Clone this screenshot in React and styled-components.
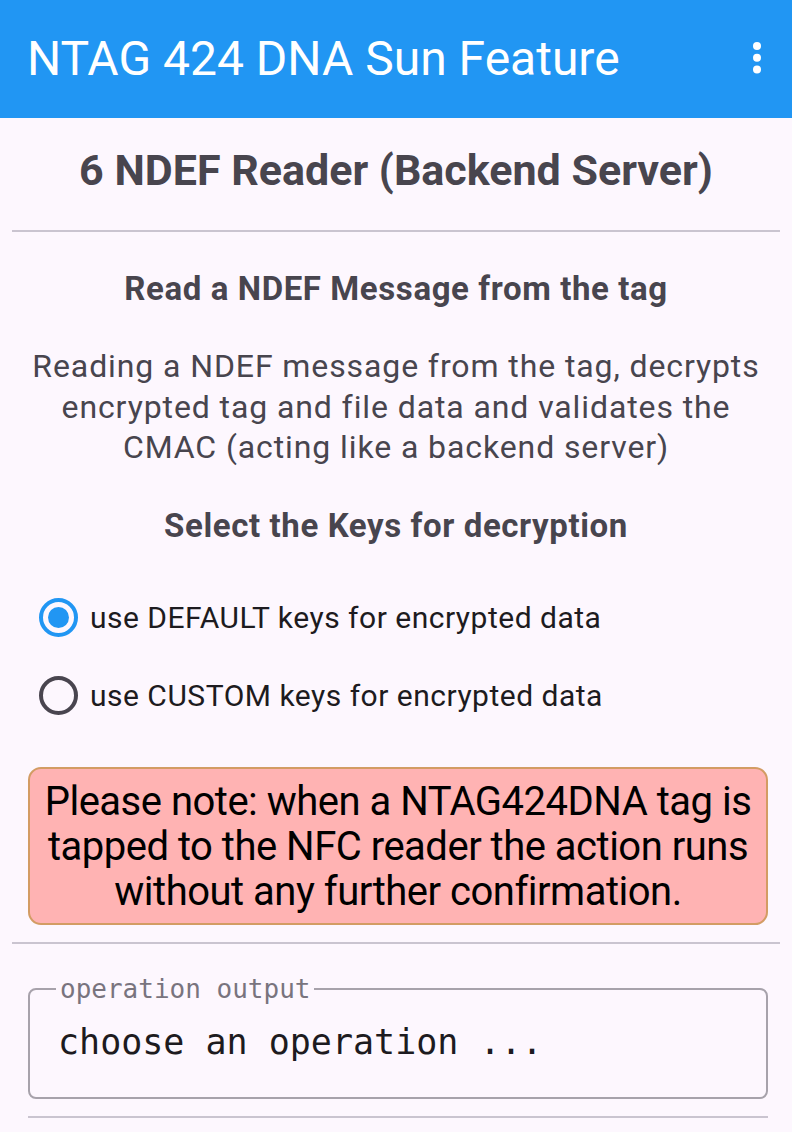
import React from 'react';
import styled, { createGlobalStyle } from 'styled-components';

const GlobalStyle = createGlobalStyle`
  html, body {
    margin: 0;
    padding: 0;
    background: #fdf7fe;
  }

  body {
    font-family: Roboto, "Noto Sans", sans-serif;
    -webkit-font-smoothing: antialiased;
  }
`;

const Screen = styled.div`
  width: 792px;
  min-height: 1132px;
  background: #fdf7fe;
  overflow: hidden;
`;

const AppBar = styled.header`
  height: 118px;
  background: #2196f3;
  display: flex;
  align-items: center;
  justify-content: space-between;
  padding: 0 31px 0 27px;
  box-sizing: border-box;
`;

const Title = styled.h1`
  margin: 0;
  font-size: 48px;
  font-weight: 400;
  line-height: 118px;
  color: #fff;
`;

const MenuButton = styled.button`
  border: 0;
  background: none;
  padding: 0;
  display: flex;
  margin-top: -2px;
`;

const Content = styled.main`
  padding: 0 12px;
`;

const Heading = styled.h2`
  margin: 0;
  padding: 27px 0 35px;
  font-size: 43px;
  font-weight: 700;
  line-height: 50px;
  text-align: center;
  color: #48454e;
`;

const Divider = styled.hr`
  border: 0;
  height: 2px;
  margin: ${p => p.$top || 0}px ${p => (p.$inset ? '12px 0 16px' : '0')};
  background: #cac4d0;
`;

const SubHeading = styled.h3`
  margin: ${p => p.$top}px 0 0;
  font-size: 33px;
  font-weight: 700;
  letter-spacing: 0.6px;
  line-height: 40px;
  text-align: center;
  color: #48454e;
`;

const Paragraph = styled.p`
  margin: 37px 0 0;
  padding: 0 10px;
  font-size: 32px;
  letter-spacing: 0.9px;
  line-height: 40.5px;
  text-align: center;
  color: #48454e;
`;

const RadioGroup = styled.div`
  margin-top: 33px;
  padding-left: 27px;
`;

const RadioRow = styled.label`
  height: 78px;
  display: flex;
  align-items: center;
  gap: 12px;
`;

const RadioCircle = styled.span`
  width: 39px;
  height: 39px;
  box-sizing: border-box;
  border-radius: 50%;
  border: 4px solid ${p => (p.$checked ? '#2196f3' : '#49454f')};
  display: flex;
  align-items: center;
  justify-content: center;

  &::after {
    content: '';
    width: 21px;
    height: 21px;
    border-radius: 50%;
    background: #2196f3;
    display: ${p => (p.$checked ? 'block' : 'none')};
  }
`;

const RadioText = styled.span`
  font-size: 30px;
  letter-spacing: 0.5px;
  color: #1d1b20;
`;

const Notice = styled.div`
  margin: 32px 12px 0 16px;
  padding: 10px 6px 9px;
  border: 2px solid #d39c64;
  border-radius: 13px;
  background: #ffb3b3;
  font-size: 40px;
  letter-spacing: -0.5px;
  line-height: 45px;
  text-align: center;
  color: #000;
`;

const OutputField = styled.fieldset`
  margin: 30px 12px 0 16px;
  padding: 0 26px 35px;
  border: 2px solid #a7a2ab;
  border-radius: 8px;
  font-family: "DejaVu Sans Mono", "Liberation Mono", monospace;
`;

const OutputLabel = styled.legend`
  padding: 0 4px;
  font-size: 26px;
  line-height: 30px;
  color: #79747e;
`;

const OutputText = styled.div`
  padding: 18px 2px 0;
  font-size: 35px;
  line-height: 40px;
  color: #1d1b20;
`;

const DotsIcon = () => (
  <svg width="8" height="32" viewBox="0 0 8 32" fill="#fff">
    <circle cx="4" cy="4" r="4" />
    <circle cx="4" cy="15.7" r="4" />
    <circle cx="4" cy="27.4" r="4" />
  </svg>
);

const keyOptions = [
  { id: 'default', label: 'use DEFAULT keys for encrypted data', checked: true },
  { id: 'custom', label: 'use CUSTOM keys for encrypted data', checked: false },
];

export default function App() {
  return (
    <Screen>
      <GlobalStyle />
      <AppBar>
        <Title>NTAG 424 DNA Sun Feature</Title>
        <MenuButton aria-label="more options">
          <DotsIcon />
        </MenuButton>
      </AppBar>
      <Content>
        <Heading>6 NDEF Reader (Backend Server)</Heading>
        <Divider />
        <SubHeading $top={37}>Read a NDEF Message from the tag</SubHeading>
        <Paragraph>
          Reading a NDEF message from the tag, decrypts encrypted tag and file data and
          validates the CMAC (acting like a backend server)
        </Paragraph>
        <SubHeading $top={38}>Select the Keys for decryption</SubHeading>
        <RadioGroup>
          {keyOptions.map(option => (
            <RadioRow key={option.id}>
              <RadioCircle $checked={option.checked} />
              <RadioText>{option.label}</RadioText>
            </RadioRow>
          ))}
        </RadioGroup>
        <Notice>
          Please note: when a NTAG424DNA tag is tapped to the NFC reader the action runs
          without any further confirmation.
        </Notice>
        <Divider $top={17} />
        <OutputField>
          <OutputLabel>operation output</OutputLabel>
          <OutputText>choose an operation ...</OutputText>
        </OutputField>
        <Divider $top={17} $inset />
      </Content>
    </Screen>
  );
}
